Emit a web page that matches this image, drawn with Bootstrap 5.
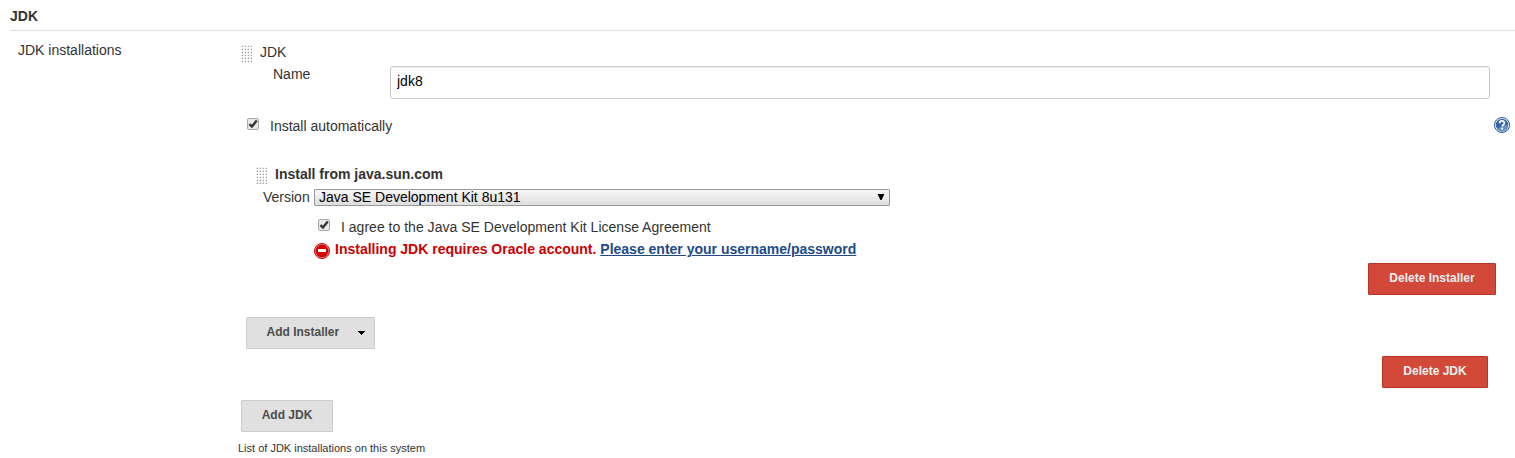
<!DOCTYPE html>
<html lang="en">
<head>
<meta charset="utf-8">
<meta name="viewport" content="width=device-width, initial-scale=1">
<title>JDK</title>
<link rel="stylesheet" href="https://cdn.jsdelivr.net/npm/bootstrap@5.3.0/dist/css/bootstrap.min.css">
<style>
body{font-family:"Liberation Sans",Arial,sans-serif;font-size:14px;line-height:20px;color:#333;background:#fff;overflow:hidden}
.section-title{font-size:14px;line-height:20px;margin:0 0 0 10px;padding:6px 0 4px;border-bottom:1px solid #ddd}
.setting-label{width:238px;padding:9px 0 0 18px}
.grip{width:12px;height:18px;margin:3px 7px -1px 0;flex:none}
.jdk-row{padding:11px 0 0 3px}
.name-row{margin-top:2px;height:35px;padding:0 25px 0 35px}
.name-row label{width:117px}
.name-row .form-control{height:33px;margin-top:2px;padding:4px 6px 7px;font-size:14px;line-height:20px;color:#000;border:1px solid #ccc;border-radius:3px;box-shadow:inset 0 1px 1px rgba(0,0,0,.075)}
.auto-row{margin-top:17px;padding:0 5px 0 9px}
.help{margin-top:1px}
.tick-box{width:12px;height:12px;flex:none;margin:2px 11px 0 0}
.installer{margin-top:28px;padding-left:18px}
.version-row{margin:3px 0 0 7px}
.version-row label{width:51px}
.version-row .picker{width:576px;height:17px;margin-top:2px;padding:0 4px;border:1px solid #999;border-radius:1px;background:linear-gradient(#f8f8f8,#ddd);color:#000;font-size:14px;line-height:15px}
.agree-row{margin:10px 0 0 62px;letter-spacing:.015px}
.error-row{margin:2px 0 0 58px;color:#c00}
.error-row svg{margin:4px 5px 0 0}
.error-row a{color:#204a87}
.btn.act{height:32px;padding:0 0 2px;font-size:12px;font-weight:700;line-height:28px;border:1px solid #ccc;border-radius:1px;background:#e0e0e0;color:#4d4d4d;white-space:nowrap}
.btn.del{background:#d24939;border-color:#b83426;color:#eee}
.w-del-installer{width:128px}
.w-del-jdk{width:106px}
.w-add-installer{width:129px}
.w-add-jdk{width:92px}
.btn.w-add-installer{padding:0 9px 2px 19.5px}
.caret{margin-top:2px}
.hint{font-size:11px;line-height:14px;margin-top:9px}
</style>
</head>
<body>
<svg class="d-none">
  <symbol id="grip" viewBox="0 0 12 18">
    <g id="griprow"><path d="M0 1h1v1H0zM1 0h1v1H1zM3 1h1v1H3zM4 0h1v1H4zM6 1h1v1H6zM7 0h1v1H7zM9 1h1v1H9zM10 0h1v1h-1z" fill="#ddd"/><path d="M1 1h1v1H1zM4 1h1v1H4zM7 1h1v1H7zM10 1h1v1h-1z" fill="#a0a098"/></g>
    <use href="#griprow" y="3"/><use href="#griprow" y="6"/><use href="#griprow" y="9"/><use href="#griprow" y="12"/><use href="#griprow" y="15"/>
  </symbol>
  <symbol id="checked" viewBox="0 0 12 12">
    <rect x=".5" y=".5" width="11" height="11" rx="1.5" fill="#e8e8e8" stroke="#aaa"/>
    <path d="M2.4 6.2l2.5 2.3 4.9-6" fill="none" stroke="#333" stroke-width="2.4"/>
  </symbol>
</svg>
<main>
  <h1 class="section-title fw-bold">JDK</h1>
  <div class="d-flex">
    <div class="setting-label flex-shrink-0">JDK installations</div>
    <div class="flex-grow-1">
      <div class="jdk-row d-flex"><svg class="grip"><use href="#grip"/></svg><span>JDK</span></div>
      <div class="name-row d-flex"><label for="jdk-name" class="flex-shrink-0">Name</label><input id="jdk-name" class="form-control" value="jdk8"></div>
      <div class="auto-row d-flex">
        <svg class="tick-box"><use href="#checked"/></svg><span class="flex-grow-1">Install automatically</span>
        <svg class="help" width="16" height="16" viewBox="0 0 16 16">
          <circle cx="8" cy="8" r="7.5" fill="#fff" stroke="#2b5591"/><circle cx="8" cy="8" r="6.2" fill="#3465a4"/><path d="M3 12A6.2 6.2 0 0 0 14.2 8Q10 8 3 12z" fill="#6b94c5"/>
          <path d="M5.6 6.2C5.6 3.2 10.4 3.2 10.4 6c0 1.7-2.3 1.7-2.3 3.6" fill="none" stroke="#fff" stroke-width="1.8"/><path d="M7.2 10.8H9v1.8H7.2z" fill="#fff"/>
        </svg>
      </div>
      <div class="installer">
        <div class="d-flex fw-bold"><svg class="grip"><use href="#grip"/></svg><span>Install from java.sun.com</span></div>
        <div class="version-row d-flex"><label>Version</label>
          <div class="picker d-flex justify-content-between" role="combobox"><span>Java SE Development Kit 8u131</span>
            <svg width="8" height="15" viewBox="0 0 8 15"><path d="M.6 4h6.8L4.6 10H3.4z"/></svg></div>
        </div>
        <div class="agree-row d-flex"><svg class="tick-box"><use href="#checked"/></svg><span>I agree to the Java SE Development Kit License Agreement</span></div>
        <div class="error-row d-flex fw-bold">
          <svg width="16" height="16" viewBox="0 0 16 16"><circle cx="8" cy="8" r="7.5" fill="#f0a0a0" stroke="#c00"/><circle cx="8" cy="8" r="6.4" fill="#d40000"/><path d="M4 6h8v3H4z" fill="#fff"/></svg>
          <span>Installing JDK requires Oracle account. <a href="#">Please enter your username/password</a></span>
        </div>
      </div>
      <div class="d-flex justify-content-end" style="margin:4px 19px 0 0"><button class="btn act del w-del-installer">Delete Installer</button></div>
      <div class="d-flex" style="margin:22px 0 0 8px"><button class="btn act w-add-installer d-flex align-items-center justify-content-between">Add Installer<svg class="caret" width="7" height="4" viewBox="0 0 7 4" shape-rendering="crispEdges"><path d="M0 0h7v1H0zM1 1h5v1H1zM2 2h3v1H2zM3 3h1v1H3z" fill="#000"/></svg></button></div>
      <div class="d-flex justify-content-end" style="margin:7px 27px 0 0"><button class="btn act del w-del-jdk">Delete JDK</button></div>
      <div class="d-flex" style="margin:12px 0 0 3px"><button class="btn act w-add-jdk">Add JDK</button></div>
      <div class="hint">List of JDK installations on this system</div>
    </div>
  </div>
</main>
<script src="https://cdn.jsdelivr.net/npm/bootstrap@5.3.0/dist/js/bootstrap.bundle.min.js"></script>
</body>
</html>
